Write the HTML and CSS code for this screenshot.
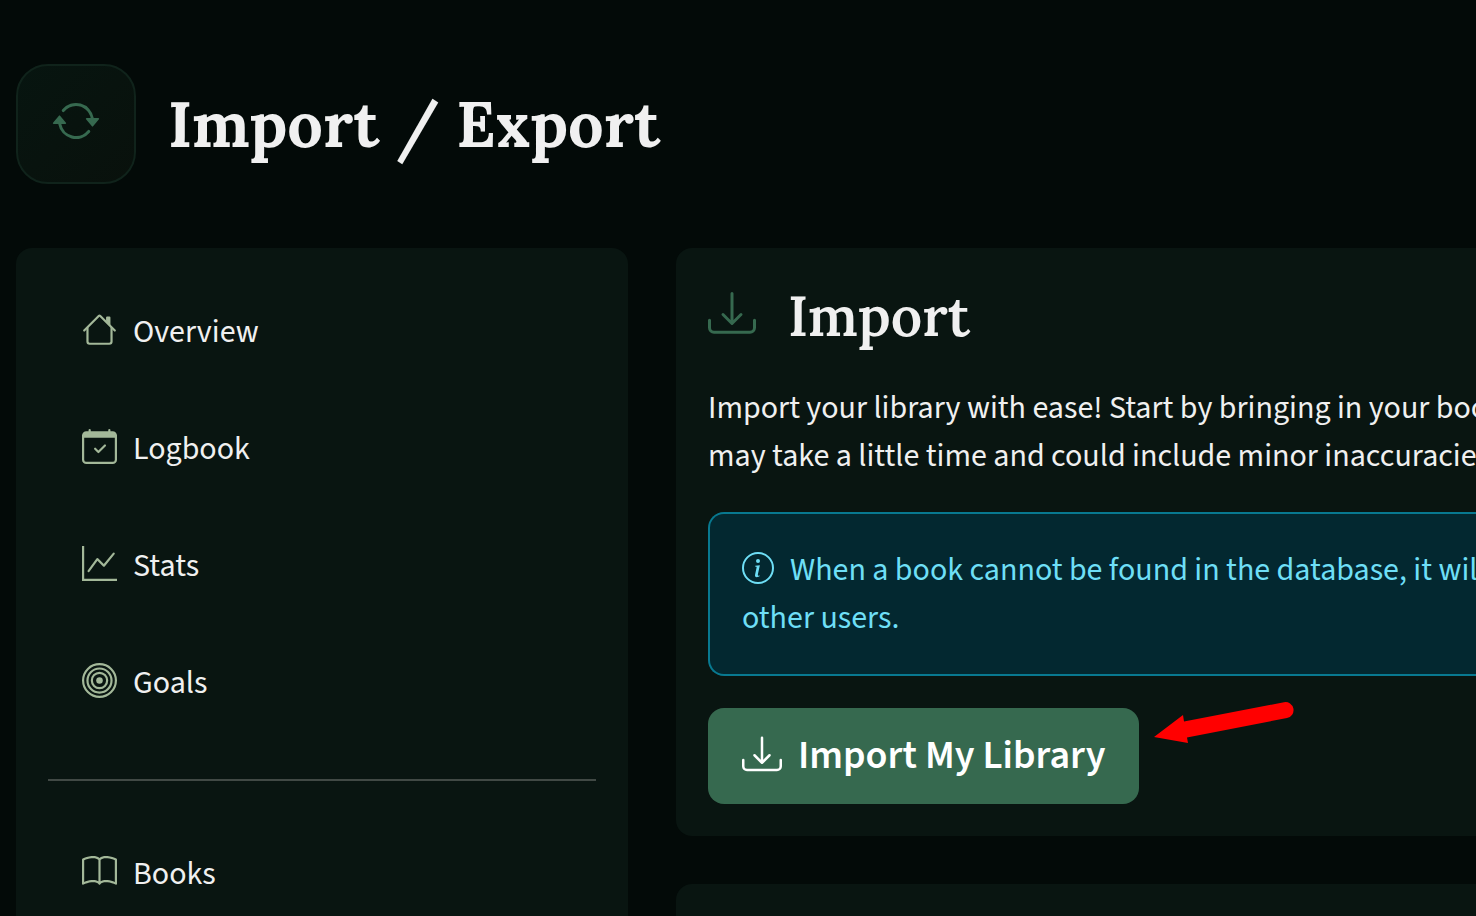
FILE: index.html
```html
<!DOCTYPE html>
<html lang="en">
<head>
<meta charset="utf-8">
<meta name="viewport" content="width=device-width, initial-scale=1">
<title>Import / Export</title>
<link rel="stylesheet" href="styles.css">
</head>
<body>
<svg class="sprite" aria-hidden="true">
  <symbol id="download" viewBox="0 0 16 16"><path d="M.5 9.9a.5.5 0 0 1 .5.5v2.5a1 1 0 0 0 1 1h12a1 1 0 0 0 1-1v-2.5a.5.5 0 0 1 1 0v2.5a2 2 0 0 1-2 2H2a2 2 0 0 1-2-2v-2.5a.5.5 0 0 1 .5-.5z"/><path d="M7.646 11.854a.5.5 0 0 0 .708 0l3-3a.5.5 0 0 0-.708-.708L8.5 10.293V1.5a.5.5 0 0 0-1 0v8.793L5.354 8.146a.5.5 0 1 0-.708.708l3 3z"/></symbol>
</svg>
<header class="page-header">
  <div class="badge">
    <svg class="icon icon-lg" viewBox="0 0 16 16" aria-hidden="true"><path d="M11.534 7h3.932a.25.25 0 0 1 .192.41l-1.966 2.36a.25.25 0 0 1-.384 0l-1.966-2.36a.25.25 0 0 1 .192-.41zm-11 2h3.932a.25.25 0 0 0 .192-.41L2.692 6.23a.25.25 0 0 0-.384 0L.342 8.59A.25.25 0 0 0 .534 9z"/><path d="M8 3c-1.552 0-2.94.707-3.857 1.818a.5.5 0 1 1-.771-.636A6.002 6.002 0 0 1 13.917 7H12.9A5.002 5.002 0 0 0 8 3zM3.1 9a5.002 5.002 0 0 0 8.757 2.182.5.5 0 1 1 .771.636A6.002 6.002 0 0 1 2.083 9H3.1z"/></svg>
  </div>
  <h1 class="page-title">Import / Export</h1>
</header>
<div class="layout">
  <nav class="panel sidebar" aria-label="Main">
    <ul class="nav-list">
      <li><a class="nav-link" href="#overview"><svg class="icon icon-md" viewBox="0 0 16 16" aria-hidden="true"><path d="M2 13.5V7h1v6.5a.5.5 0 0 0 .5.5h9a.5.5 0 0 0 .5-.5V7h1v6.5a1.5 1.5 0 0 1-1.5 1.5h-9A1.5 1.5 0 0 1 2 13.5zm11-11V6l-2-2V2.5a.5.5 0 0 1 .5-.5h1a.5.5 0 0 1 .5.5z"/><path d="M7.293 1.5a1 1 0 0 1 1.414 0l6.647 6.646a.5.5 0 0 1-.708.708L8 2.207 1.354 8.854a.5.5 0 1 1-.708-.708L7.293 1.5z"/></svg>Overview</a></li>
      <li><a class="nav-link" href="#logbook"><svg class="icon icon-md" viewBox="0 0 16 16" aria-hidden="true"><path d="M10.854 7.146a.5.5 0 0 1 0 .708l-3 3a.5.5 0 0 1-.708 0l-1.5-1.5a.5.5 0 1 1 .708-.708L7.5 9.793l2.646-2.647a.5.5 0 0 1 .708 0z"/><path d="M3.5 0a.5.5 0 0 1 .5.5V1h8V.5a.5.5 0 0 1 1 0V1h1a2 2 0 0 1 2 2v11a2 2 0 0 1-2 2H2a2 2 0 0 1-2-2V3a2 2 0 0 1 2-2h1V.5a.5.5 0 0 1 .5-.5zM1 4v10a1 1 0 0 0 1 1h12a1 1 0 0 0 1-1V4H1z"/></svg>Logbook</a></li>
      <li><a class="nav-link" href="#stats"><svg class="icon icon-md" viewBox="0 0 16 16" aria-hidden="true"><path fill-rule="evenodd" d="M0 0h1v15h15v1H0V0zm14.817 3.113a.5.5 0 0 1 .07.704l-4.5 5.5a.5.5 0 0 1-.74.037L7.06 6.767l-3.656 5.027a.5.5 0 0 1-.808-.588l4-5.5a.5.5 0 0 1 .758-.06l2.609 2.61 4.15-5.073a.5.5 0 0 1 .704-.07z"/></svg>Stats</a></li>
      <li><a class="nav-link" href="#goals"><svg class="icon icon-md" viewBox="0 0 16 16" aria-hidden="true"><path d="M8 15A7 7 0 1 1 8 1a7 7 0 0 1 0 14zm0 1A8 8 0 1 0 8 0a8 8 0 0 0 0 16z"/><path d="M8 13A5 5 0 1 1 8 3a5 5 0 0 1 0 10zm0 1A6 6 0 1 0 8 2a6 6 0 0 0 0 12z"/><path d="M8 11a3 3 0 1 1 0-6 3 3 0 0 1 0 6zm0 1a4 4 0 1 0 0-8 4 4 0 0 0 0 8z"/><path d="M9.5 8a1.5 1.5 0 1 1-3 0 1.5 1.5 0 0 1 3 0z"/></svg>Goals</a></li>
    </ul>
    <hr class="divider">
    <ul class="nav-list">
      <li><a class="nav-link" href="#books"><svg class="icon icon-md" viewBox="0 0 16 16" aria-hidden="true"><path d="M1 2.828c.885-.37 2.154-.769 3.388-.893 1.33-.134 2.458.063 3.112.752v9.746c-.935-.53-2.12-.603-3.213-.493-1.18.12-2.37.461-3.287.811V2.828zm7.5-.141c.654-.689 1.782-.886 3.112-.752 1.234.124 2.503.523 3.388.893v9.923c-.918-.35-2.107-.692-3.287-.81-1.094-.111-2.278-.039-3.213.492V2.687zM8 1.783C7.015.936 5.587.81 4.287.94c-1.514.153-3.042.672-3.994 1.105A.5.5 0 0 0 0 2.5v11a.5.5 0 0 0 .707.455c.882-.4 2.303-.881 3.68-1.02 1.409-.142 2.59.087 3.223.877a.5.5 0 0 0 .78 0c.633-.79 1.814-1.019 3.222-.877 1.378.139 2.8.62 3.681 1.02A.5.5 0 0 0 16 13.5v-11a.5.5 0 0 0-.293-.455c-.952-.433-2.48-.952-3.994-1.105C10.413.809 8.985.936 8 1.783z"/></svg>Books</a></li>
    </ul>
  </nav>
  <main class="content">
    <section class="panel card">
      <h2 class="card-title"><svg class="icon icon-lg" aria-hidden="true"><use href="#download"/></svg>Import</h2>
      <p class="lead">Import your library with ease! Start by bringing in your boo<br>may take a little time and could include minor inaccuracie</p>
      <div class="notice" role="note"><svg class="icon icon-info" viewBox="0 0 16 16" aria-hidden="true"><path d="M8 15A7 7 0 1 1 8 1a7 7 0 0 1 0 14zm0 1A8 8 0 1 0 8 0a8 8 0 0 0 0 16z"/><path d="m8.93 6.588-2.29.287-.082.38.45.083c.294.07.352.176.288.469l-.738 3.468c-.194.897.105 1.319.808 1.319.545 0 1.178-.252 1.465-.598l.088-.416c-.2.176-.492.246-.686.246-.275 0-.375-.193-.304-.533L8.93 6.588zM9 4.5a1 1 0 1 1-2 0 1 1 0 0 1 2 0z"/></svg>When a book cannot be found in the database, it wil<br>other users.</div>
      <div class="action">
        <button class="import-button" type="button"><svg class="icon icon-button" aria-hidden="true"><use href="#download"/></svg>Import My Library</button>
        <svg class="pointer" viewBox="0 0 140 42" aria-hidden="true"><path d="M0 35 29 13 30 19.500 130 .2A8 8 0 0 1 133 16L33 35.500 34 41z"/></svg>
      </div>
    </section>
    <section class="panel card next-card"></section>
  </main>
</div>
</body>
</html>
```
FILE: styles.css
```css
* {
  box-sizing: border-box;
}

body {
  margin: 0;
  height: 100vh;
  overflow: hidden;
  background: #030a08;
  color: #f0f0f0;
  font-family: "Source Sans 3", "Noto Sans CJK SC", "Noto Sans", sans-serif;
  font-size: 32px;
  font-weight: 450;
  line-height: 48px;
}

h1, h2, p, ul {
  margin: 0;
  padding: 0;
}

.sprite {
  display: none;
}

.icon {
  flex: none;
  fill: currentColor;
}

.icon-lg {
  width: 48px;
  height: 48px;
  color: #36694f;
}

.icon-md {
  width: 35px;
  height: 35px;
  margin-bottom: 4px;
  color: #a3b899;
}

.page-header {
  display: flex;
  align-items: center;
  gap: 32px;
  padding: 64px 16px;
}

.badge {
  display: grid;
  place-items: center;
  width: 120px;
  height: 120px;
  padding-bottom: 6px;
  border: 2px solid #10231b;
  border-radius: 32px;
  background: linear-gradient(135deg, #071510, #09110c);
}

.page-title {
  font-family: "Lora", "Liberation Serif", serif;
  font-size: 63px;
  font-weight: 700;
  line-height: 80px;
}

.layout {
  display: grid;
  grid-template-columns: minmax(0, 612fr) minmax(0, 800fr);
  gap: 48px;
  padding-left: 16px;
}

.panel {
  background: #091511;
}

.sidebar {
  padding: 49px 32px;
  border-radius: 16px;
}

.nav-list {
  display: flex;
  flex-direction: column;
  gap: 48px;
  padding-left: 34px;
  list-style: none;
}

.nav-link {
  display: flex;
  align-items: center;
  gap: 16px;
  height: 69px;
  color: inherit;
  text-decoration: none;
}

.divider {
  height: 2px;
  margin: 62px 0 58px;
  border: 0;
  background: #414945;
}

.content {
  display: flex;
  flex-direction: column;
  gap: 48px;
}

.card {
  padding: 32px 0 32px 32px;
  border-radius: 16px 0 0 16px;
  white-space: nowrap;
}

.card-title {
  display: flex;
  align-items: center;
  gap: 32px;
  margin-bottom: 32px;
  font-family: "Lora", "Liberation Serif", serif;
  font-size: 55px;
  font-weight: 600;
  line-height: 72px;
}

.card-title .icon {
  margin-bottom: 6px;
}

.notice {
  margin: 32px 0;
  padding: 32px 0 32px 32px;
  border: 2px solid #087990;
  border-right: 0;
  border-radius: 16px 0 0 16px;
  background: #032830;
  color: #6edff6;
}

.icon-info {
  width: 32px;
  height: 32px;
  margin-right: 16px;
  vertical-align: -4px;
}

.action {
  position: relative;
}

.import-button {
  display: inline-flex;
  align-items: center;
  gap: 16px;
  height: 96px;
  padding: 0 34px;
  border: 0;
  border-radius: 16px;
  background: #36694f;
  color: #fff;
  font: inherit;
  font-size: 40px;
  font-weight: 600;
  vertical-align: top;
}

.icon-button {
  width: 40px;
  height: 40px;
  margin-bottom: 4px;
}

/* Callout arrow laid over the card, pointing at the button */
.pointer {
  position: absolute;
  top: -6px;
  left: 446px;
  width: 140px;
  height: 42px;
  fill: #f00;
}

.next-card {
  min-height: 32px;
  padding: 0;
  flex: 1;
}
```
